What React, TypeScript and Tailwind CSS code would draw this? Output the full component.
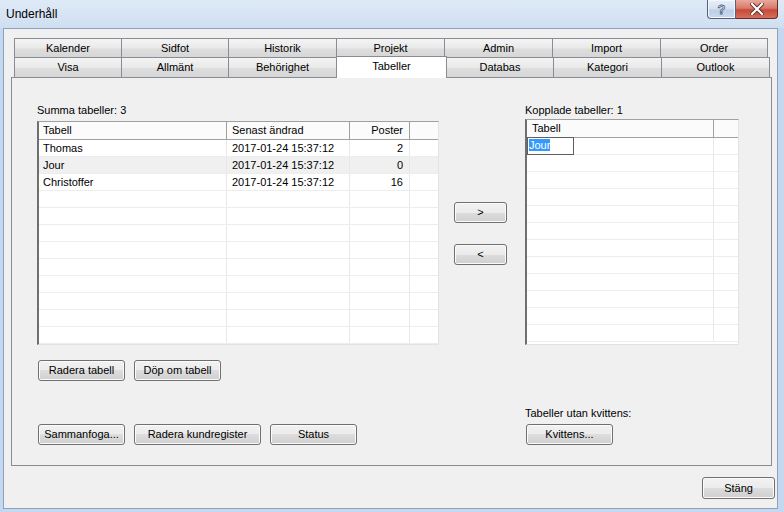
import React from "react";

const btn =
  "flex items-center justify-center border border-[#707070] rounded-[3px] bg-[linear-gradient(#f2f2f2,#ebebeb_50%,#dddddd_50%,#cfcfcf)] shadow-[inset_0_0_0_1px_#fbfbfb] text-black";

const tabBg = "bg-[linear-gradient(#f4f4f4,#e9e9e9_50%,#dedede_55%,#d6d6d6)]";

function Button({ label, w, h = 21 }: { label: string; w: number; h?: number }) {
  return (
    <button className={btn} style={{ width: w, height: h }}>
      {label}
    </button>
  );
}

const row1 = [
  ["Kalender", 107],
  ["Sidfot", 107],
  ["Historik", 108],
  ["Projekt", 108],
  ["Admin", 108],
  ["Import", 108],
  ["Order", 108],
] as const;

const row2 = [
  ["Visa", 107],
  ["Allmänt", 107],
  ["Behörighet", 108],
  ["Tabeller", 111],
  ["Databas", 106],
  ["Kategori", 108],
  ["Outlook", 109],
] as const;

function TabRows() {
  return (
    <div className="pl-[3px]">
      <div className="flex">
        {row1.map(([label, w], i) => (
          <div
            key={label}
            style={{ width: w }}
            className={`h-[19px] border-t border-l border-[#898c95] ${tabBg} flex items-center justify-center leading-none ${
              i === row1.length - 1 ? "border-r" : ""
            }`}
          >
            {label}
          </div>
        ))}
      </div>
      <div className="flex items-start">
        {row2.map(([label, w], i) =>
          label === "Tabeller" ? (
            <div
              key={label}
              style={{ width: w }}
              className="relative z-10 -mt-[1px] -mb-[1px] h-[22px] border-t border-x border-[#898c95] bg-white flex items-start justify-center pt-[4px] leading-none"
            >
              {label}
            </div>
          ) : (
            <div
              key={label}
              style={{ width: w }}
              className={`h-[20px] border-t border-l border-[#898c95] ${tabBg} flex items-center justify-center leading-none ${
                i === row2.length - 1 ? "border-r" : ""
              } ${i === 4 ? "border-l-0" : ""}`}
            >
              {label}
            </div>
          )
        )}
      </div>
    </div>
  );
}

const tables = [
  { name: "Thomas", date: "2017-01-24 15:37:12", count: 2 },
  { name: "Jour", date: "2017-01-24 15:37:12", count: 0 },
  { name: "Christoffer", date: "2017-01-24 15:37:12", count: 16 },
];

function LeftGrid() {
  const rows = Array.from({ length: 12 }, (_, i) => tables[i]);
  return (
    <div className="w-[402px] h-[224px] bg-white border-t border-t-[#a0a0a0] border-l-2 border-l-[#6f6f6f] border-r border-r-[#e3e3e3] border-b border-b-[#e3e3e3] overflow-hidden">
      <div className="flex h-[18px] border-b border-[#a0a0a0] bg-[#fbfbfb] leading-[17px]">
        <div className="w-[188px] border-r border-[#a0a0a0] pl-[4px]">Tabell</div>
        <div className="w-[123px] border-r border-[#a0a0a0] pl-[5px]">Senast ändrad</div>
        <div className="w-[60px] border-r border-[#a0a0a0] pr-[6px] text-right">Poster</div>
        <div className="flex-1" />
      </div>
      {rows.map((r, i) => (
        <div
          key={i}
          className={`flex h-[17px] border-b border-[#ededed] leading-[16px] ${i === 1 ? "bg-[#f0f0f0]" : ""}`}
        >
          <div className="w-[188px] border-r border-[#e8e8e8] pl-[4px]">{r?.name}</div>
          <div className="w-[123px] border-r border-[#e8e8e8] pl-[5px]">{r?.date}</div>
          <div className="w-[60px] border-r border-[#e8e8e8] pr-[6px] text-right">{r?.count}</div>
          <div className="flex-1" />
        </div>
      ))}
    </div>
  );
}

function RightGrid() {
  return (
    <div className="w-[214px] h-[226px] bg-white border-t border-t-[#a0a0a0] border-l-2 border-l-[#6f6f6f] border-r border-r-[#e3e3e3] border-b border-b-[#e3e3e3] overflow-hidden">
      <div className="flex h-[18px] border-b border-[#a0a0a0] bg-[#fbfbfb] leading-[17px]">
        <div className="w-[187px] border-r border-[#a0a0a0] pl-[5px]">Tabell</div>
        <div className="flex-1" />
      </div>
      {Array.from({ length: 12 }, (_, i) => (
        <div key={i} className="flex h-[17px] border-b border-[#ededed] leading-[16px]">
          <div className="relative w-[187px] border-r border-[#e8e8e8]">
            {i === 0 && (
              <div className="absolute left-0 -top-[1px] w-[47px] h-[18px] border border-[#5f5f5f] bg-white leading-[15px] pl-[1px]">
                <span className="bg-[#3399ff] text-white">Jour</span>
              </div>
            )}
          </div>
          <div className="flex-1" />
        </div>
      ))}
    </div>
  );
}

function TitleBar() {
  return (
    <div className="h-[28px] flex items-start bg-[linear-gradient(#dfeaf7,#cfdff1)]">
      <div className="pl-[6px] pt-[6px] text-[12px] leading-[16px] text-black">Underhåll</div>
      <div className="ml-auto mr-[6px] flex">
        <div className="w-[29px] h-[19px] border border-t-0 border-[#52627a] rounded-bl-[4px] bg-[linear-gradient(#e9f0f9,#d3e0f0_50%,#bccfe7_55%,#c9daee)] flex items-center justify-center shadow-[inset_0_0_0_1px_#f4f8fd]">
          <span className="text-[13px] font-bold leading-none text-[#dfe8f3] [-webkit-text-stroke:0.8px_#59687f]">?</span>
        </div>
        <div className="w-[42px] h-[19px] border border-t-0 border-l-0 border-[#6b2a22] rounded-br-[4px] bg-[linear-gradient(#e9a99c,#d77b6b_45%,#c74a37_55%,#d3705c)] flex items-center justify-center">
          <svg width="14" height="12" viewBox="0 0 14 12">
            <path d="M2 1 L12 11 M12 1 L2 11" stroke="#5a2a25" strokeWidth="4" strokeLinecap="square" />
            <path d="M2 1 L12 11 M12 1 L2 11" stroke="#ffffff" strokeWidth="2.2" strokeLinecap="square" />
          </svg>
        </div>
      </div>
    </div>
  );
}

export default function App() {
  return (
    <div className="w-[784px] h-[512px] bg-[#c4d8ef] flex flex-col font-['Liberation_Sans',Arial,sans-serif] text-[11px] text-black overflow-hidden">
      <TitleBar />
      <div className="flex-1 ml-[3px] mr-[6px] mb-[3px] border border-[#8fa2bb] bg-[#f0f0f0] flex flex-col">
        <div className="ml-[7px] mt-[9px]">
          <TabRows />
          <div className="w-[761px] h-[389px] border border-[#898c95] bg-[#f0f0f0] flex pl-[25px]">
            <div className="flex flex-col pt-[24px]">
              <div className="h-[16px] leading-[16px]">Summa tabeller: 3</div>
              <div className="mt-[3px]">
                <LeftGrid />
              </div>
              <div className="mt-[15px] ml-[1px] flex gap-[9px]">
                <Button label="Radera tabell" w={87} />
                <Button label="Döp om tabell" w={87} />
              </div>
              <div className="mt-[43px] ml-[1px] flex gap-[9px]">
                <Button label="Sammanfoga..." w={87} />
                <Button label="Radera kundregister" w={127} />
                <Button label="Status" w={87} />
              </div>
            </div>
            <div className="ml-[15px] flex flex-col pt-[124px] gap-[21px]">
              <Button label=">" w={53} h={21} />
              <Button label="<" w={53} h={21} />
            </div>
            <div className="ml-[18px] flex flex-col pt-[24px]">
              <div className="h-[16px] leading-[16px]">Kopplade tabeller: 1</div>
              <div className="mt-[1px]">
                <RightGrid />
              </div>
              <div className="mt-[60px] h-[16px] leading-[16px]">Tabeller utan kvittens:</div>
              <div className="mt-[3px] ml-[1px]">
                <Button label="Kvittens..." w={87} />
              </div>
            </div>
          </div>
        </div>
        <div className="mt-[11px] mr-[2px] flex justify-end">
          <Button label="Stäng" w={73} h={22} />
        </div>
      </div>
    </div>
  );
}
